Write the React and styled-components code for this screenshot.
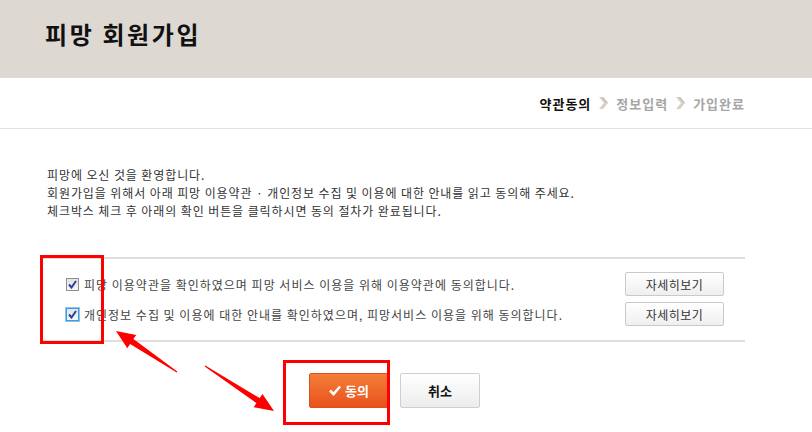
import React from "react";
import styled, { createGlobalStyle } from "styled-components";

const GlobalStyle = createGlobalStyle`
  body {
    margin: 0;
    background: #fff;
    font-family: "Noto Sans CJK KR", "Noto Sans", sans-serif;
    color: #333;
  }
`;

const steps = [
  { label: "약관동의", active: true },
  { label: "정보입력" },
  { label: "가입완료" },
];

const rows = [
  { text: "피망 이용약관을 확인하였으며 피망 서비스 이용을 위해 이용약관에 동의합니다." },
  {
    text: "개인정보 수집 및 이용에 대한 안내를 확인하였으며, 피망서비스 이용을 위해 동의합니다.",
    focused: true,
  },
];

// tapered arrow polygon from tail to tip
const arrowPoints = (tx, ty, hx, hy) => {
  const dx = hx - tx;
  const dy = hy - ty;
  const len = Math.hypot(dx, dy);
  const ux = dx / len;
  const uy = dy / len;
  const nx = -uy;
  const ny = ux;
  const headLen = 19;
  const headW = 8;
  const bx = hx - ux * headLen;
  const by = hy - uy * headLen;
  const p = (x, y) => `${x.toFixed(1)},${y.toFixed(1)}`;
  return [
    p(tx + nx * 0.5, ty + ny * 0.5),
    p(bx + nx * 3, by + ny * 3),
    p(bx + nx * headW, by + ny * headW),
    p(hx, hy),
    p(bx - nx * headW, by - ny * headW),
    p(bx - nx * 3, by - ny * 3),
    p(tx - nx * 0.5, ty - ny * 0.5),
  ].join(" ");
};

const Chevron = () => (
  <svg width="9" height="12" viewBox="0 0 9 12">
    <polygon points="0,0 4,0 9,6 4,12 0,12 5,6" fill="#d6d0c6" />
    <polygon points="4,0 9,6 7.5,6 3,0.5" fill="#c2bbae" />
  </svg>
);

const Check = ({ color = "#2a3f9e" }) => (
  <svg width="9" height="9" viewBox="0 0 9 9">
    <path d="M1 4.5 L3.5 7.5 L8 1" fill="none" stroke={color} strokeWidth="2" />
  </svg>
);

export default function App() {
  return (
    <Page>
      <GlobalStyle />
      <Header>
        <Title>피망 회원가입</Title>
      </Header>
      <StepBar>
        {steps.map((s, i) => (
          <React.Fragment key={s.label}>
            {i > 0 && <Chevron />}
            <Step $active={s.active}>{s.label}</Step>
          </React.Fragment>
        ))}
      </StepBar>
      <Content>
        <Intro>
          <p>피망에 오신 것을 환영합니다.</p>
          <p>회원가입을 위해서 아래 피망 이용약관 · 개인정보 수집 및 이용에 대한 안내를 읽고 동의해 주세요.</p>
          <p>체크박스 체크 후 아래의 확인 버튼을 클릭하시면 동의 절차가 완료됩니다.</p>
        </Intro>
        <AgreeBox>
          {rows.map((r) => (
            <Row key={r.text}>
              <Label>
                <CheckBox $focused={r.focused}>
                  <Check />
                </CheckBox>
                <span>{r.text}</span>
              </Label>
              <DetailButton>자세히보기</DetailButton>
            </Row>
          ))}
        </AgreeBox>
        <Actions>
          <AgreeButton>
            <svg width="12" height="11" viewBox="0 0 12 11">
              <path d="M1 5.5 L4.5 9 L11 1.5" fill="none" stroke="#fff" strokeWidth="2.6" />
            </svg>
            동의
          </AgreeButton>
          <CancelButton>취소</CancelButton>
        </Actions>
      </Content>
      <Marks width="812" height="432" viewBox="0 0 812 432">
        <rect x="41.5" y="256.5" width="61" height="86" fill="none" stroke="#ff0000" strokeWidth="3" />
        <rect x="284.5" y="361.5" width="104" height="62" fill="none" stroke="#ff0000" strokeWidth="3" />
        <polygon points={arrowPoints(177, 372, 116, 331)} fill="#ff0000" />
        <polygon points={arrowPoints(205, 366, 274, 411)} fill="#ff0000" />
      </Marks>
    </Page>
  );
}

const Page = styled.div`
  position: relative;
  width: 812px;
  height: 432px;
  overflow: hidden;
`;

const Header = styled.header`
  height: 78px;
  background: #ddd9d2;
  display: flex;
  align-items: center;
  padding-left: 45px;
  box-sizing: border-box;
`;

const Title = styled.h1`
  margin: 0 0 12px;
  font-size: 24px;
  font-weight: 700;
  color: #111;
  letter-spacing: 2.6px;
`;

const StepBar = styled.nav`
  height: 51px;
  display: flex;
  align-items: center;
  justify-content: flex-end;
  gap: 8px;
  padding: 0 67px 0 0;
  border-bottom: 1px solid #e6e2dc;
  box-sizing: border-box;
`;

const Step = styled.span`
  font-size: 13px;
  font-weight: 700;
  letter-spacing: 1px;
  color: ${(p) => (p.$active ? "#111" : "#a6a6a6")};
`;

const Content = styled.main`
  padding: 0 67px 0 40px;
`;

const Intro = styled.div`
  padding: 37px 0 0 7px;
  font-size: 12px;
  line-height: 18px;
  color: #333;
  letter-spacing: 0.9px;

  p {
    margin: 0;
  }
`;

const AgreeBox = styled.section`
  margin-top: 37px;
  border-top: 2px solid #dedede;
  border-bottom: 2px solid #dedede;
  padding: 13px 21px 14px 26px;
  display: flex;
  flex-direction: column;
  gap: 6px;
`;

const Row = styled.div`
  display: flex;
  align-items: center;
  justify-content: space-between;
  height: 24px;
`;

const Label = styled.label`
  display: flex;
  align-items: center;
  gap: 5px;
  font-size: 12px;
  color: #444;
  letter-spacing: 1px;
`;

const CheckBox = styled.span`
  width: 11px;
  height: 11px;
  display: inline-flex;
  align-items: center;
  justify-content: center;
  border: 1px solid ${(p) => (p.$focused ? "#3a9be0" : "#8e8e8e")};
  box-shadow: ${(p) => (p.$focused ? "0 0 0 1px #8cc4ee" : "none")};
  background: linear-gradient(#e4e4e4, #f6f6f6);
`;

const DetailButton = styled.button`
  width: 99px;
  height: 24px;
  border: 1px solid #c9c9c9;
  border-radius: 2px;
  background: linear-gradient(#ffffff, #efefef);
  font-family: inherit;
  font-size: 12px;
  letter-spacing: 0.5px;
  color: #333;
  padding: 0;
`;

const Actions = styled.div`
  display: flex;
  justify-content: center;
  gap: 11px;
  padding: 31px 0 0 4px;
`;

const ActionButton = styled.button`
  width: 80px;
  height: 35px;
  border-radius: 2px;
  font-family: inherit;
  font-size: 13px;
  font-weight: 700;
  display: flex;
  align-items: center;
  justify-content: center;
  gap: 4px;
  padding: 0;
`;

const AgreeButton = styled(ActionButton)`
  color: #fff;
  border: 1px solid #d8531c;
  background: linear-gradient(#f47e36, #e9521f);
`;

const CancelButton = styled(ActionButton)`
  color: #111;
  border: 1px solid #cfcfcf;
  background: linear-gradient(#ffffff, #ececec);
`;

const Marks = styled.svg`
  position: absolute;
  left: 0;
  top: 0;
  pointer-events: none;
`;
